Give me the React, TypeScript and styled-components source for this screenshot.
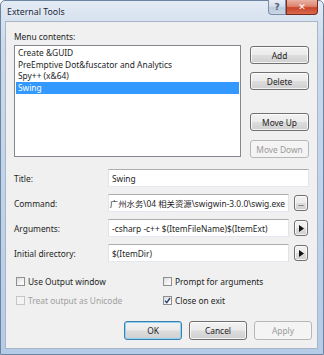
import React from "react";
import styled, { createGlobalStyle, css } from "styled-components";

const GlobalStyle = createGlobalStyle`
    html, body {
        margin: 0;
        padding: 0;
        background: #ffffff;
    }
    body {
        font-family: "Noto Sans", "Noto Sans CJK SC", sans-serif;
        font-size: 8.4px;
        color: #1e1e1e;
    }
`;

const Window = styled.div`
    width: 324px;
    height: 355px;
    box-sizing: border-box;
    border: 1px solid #6d84a0;
    border-radius: 5px 5px 0 0;
    background: linear-gradient(180deg, #e2eaf4 0%, #cbdaec 12%, #bfd2ea 60%, #b6cbe6 100%);
    display: flex;
    flex-direction: column;
    padding: 0 5px 5px 4px;
`;

const TitleBar = styled.div`
    height: 20px;
    display: flex;
    align-items: flex-start;
    justify-content: space-between;
`;

const TitleText = styled.span`
    margin: 5px 0 0 2px;
    font-size: 8.8px;
    color: #1b2838;
    text-shadow: 0 0 6px rgba(255, 255, 255, 0.9);
`;

const CaptionButtons = styled.div`
    display: flex;
    margin-top: -1px;
`;

const CaptionButton = styled.div<{ $close?: boolean }>`
    height: 15px;
    width: ${p => p.$close ? '32px' : '18px'};
    box-sizing: border-box;
    border: 1px solid ${p => p.$close ? '#7a2a1e' : '#7d8ea6'};
    border-top: none;
    border-radius: ${p => p.$close ? '0 0 4px 0' : '0 0 0 4px'};
    background: ${p => p.$close
        ? 'linear-gradient(180deg, #eab2a4 0%, #dd8570 45%, #c8452b 55%, #d86a4c 100%)'
        : 'linear-gradient(180deg, #e8eef6 0%, #d3deeb 45%, #bccbdd 55%, #c9d6e6 100%)'};
    display: flex;
    align-items: center;
    justify-content: center;
    font-family: "DejaVu Sans", sans-serif;
    font-weight: bold;
    font-size: 9px;
    color: ${p => p.$close ? '#ffffff' : '#4e5e74'};
`;

const Client = styled.div`
    flex: 1;
    background: #f0f0f0;
    border: 1px solid #a8b6c8;
    display: flex;
    flex-direction: column;
    padding: 9px 7px 0 8px;
`;

const Label = styled.div<{ $disabled?: boolean }>`
    color: ${p => p.$disabled ? '#a0a0a0' : '#1e1e1e'};
    white-space: nowrap;
`;

const MenuSection = styled.div`
    display: flex;
    gap: 9px;
    margin-top: 3px;
`;

const ListBox = styled.div`
    width: 227px;
    height: 112px;
    box-sizing: border-box;
    border: 1px solid #828790;
    background: #ffffff;
    padding: 1px 1px;
    overflow: hidden;
`;

const ListItem = styled.div<{ $selected?: boolean }>`
    height: 11.7px;
    line-height: 11.7px;
    padding-left: 2px;
    white-space: nowrap;
    background: ${p => p.$selected ? '#3399ff' : 'transparent'};
    color: ${p => p.$selected ? '#ffffff' : '#1e1e1e'};
`;

const ButtonColumn = styled.div`
    display: flex;
    flex-direction: column;
    padding-top: 1px;
`;

const winButton = css<{ $disabled?: boolean; $default?: boolean }>`
    box-sizing: border-box;
    border-radius: 3px;
    border: 1px solid ${p => p.$disabled ? '#b5b8ba' : p.$default ? '#3c7fb1' : '#707070'};
    background: ${p => p.$disabled
        ? '#f4f4f4'
        : 'linear-gradient(180deg, #f2f2f2 0%, #ebebeb 48%, #dddddd 52%, #cfcfcf 100%)'};
    box-shadow: ${p => p.$disabled ? 'none' : p.$default ? 'inset 0 0 0 1px #8fd3f2' : 'inset 0 0 0 1px rgba(255,255,255,0.75)'};
    color: ${p => p.$disabled ? '#9a9a9a' : '#1e1e1e'};
    display: flex;
    align-items: center;
    justify-content: center;
    white-space: nowrap;
`;

const PushButton = styled.div<{ $disabled?: boolean; $default?: boolean; $gapTop?: number }>`
    ${winButton};
    width: 59px;
    height: 18px;
    margin-top: ${p => p.$gapTop ?? 0}px;
`;

const FormGrid = styled.div`
    display: grid;
    grid-template-columns: 94px 181px 20px;
    row-gap: 7px;
    align-items: center;
    margin-top: 11px;
`;

const TextField = styled.div<{ $span?: boolean; $scrolled?: boolean }>`
    grid-column: ${p => p.$span ? '2 / 4' : 'auto'};
    height: 18px;
    box-sizing: border-box;
    border: 1px solid #abadb3;
    border-color: #abadb3 #e2e3ea #e3e9ef #e2e3ea;
    background: #ffffff;
    padding: 0 3px;
    display: flex;
    align-items: center;
    justify-content: ${p => p.$scrolled ? 'flex-end' : 'flex-start'};
    overflow: hidden;
    white-space: nowrap;
`;

const SideButton = styled.div<{ $disabled?: boolean; $default?: boolean }>`
    ${winButton};
    width: 14px;
    height: 16px;
    margin-left: 5px;
    font-size: 7px;
`;

const CheckGrid = styled.div`
    display: grid;
    grid-template-columns: 147px 1fr;
    row-gap: 8px;
    margin-top: 14px;
    margin-left: 2px;
`;

const CheckRow = styled.div<{ $disabled?: boolean }>`
    display: flex;
    align-items: center;
    gap: 3px;
    height: 11px;
    color: ${p => p.$disabled ? '#a0a0a0' : '#1e1e1e'};
`;

const CheckBox = styled.div<{ $disabled?: boolean }>`
    width: 9px;
    height: 9px;
    box-sizing: border-box;
    border: 1px solid ${p => p.$disabled ? '#c5c5c5' : '#8e8f8f'};
    background: ${p => p.$disabled ? '#f4f4f4' : 'linear-gradient(135deg, #dcdcdc 0%, #f4f4f4 60%, #ffffff 100%)'};
    display: flex;
    align-items: center;
    justify-content: center;
`;

const DialogButtons = styled.div`
    display: flex;
    justify-content: flex-end;
    gap: 7px;
    margin-top: 15px;
    margin-right: -2px;
`;

const DialogButton = styled(PushButton)`
    width: 58px;
    height: 19px;
`;

const Arrow = () => (
    <svg width="5" height="7" viewBox="0 0 5 7">
        <path d="M0 0 L5 3.5 L0 7 Z" fill="#111" />
    </svg>
);

const Check = () => (
    <svg width="7" height="7" viewBox="0 0 7 7">
        <path d="M1 3.6 L2.8 5.6 L6 1" stroke="#2a3f74" strokeWidth="1.4" fill="none" />
    </svg>
);

const menuItems = [
    "Create &GUID",
    "PreEmptive Dot&fuscator and Analytics",
    "Spy++ (x&64)",
    "Swing",
];

export default function App() {
    return (
        <>
            <GlobalStyle />
            <Window>
                <TitleBar>
                    <TitleText>External Tools</TitleText>
                    <CaptionButtons>
                        <CaptionButton>?</CaptionButton>
                        <CaptionButton $close>✕</CaptionButton>
                    </CaptionButtons>
                </TitleBar>
                <Client>
                    <Label>Menu contents:</Label>
                    <MenuSection>
                        <ListBox>
                            {menuItems.map((item, i) => (
                                <ListItem key={i} $selected={i === 3}>{item}</ListItem>
                            ))}
                        </ListBox>
                        <ButtonColumn>
                            <PushButton>Add</PushButton>
                            <PushButton $gapTop={8}>Delete</PushButton>
                            <PushButton $gapTop={23}>Move Up</PushButton>
                            <PushButton $gapTop={9} $disabled>Move Down</PushButton>
                        </ButtonColumn>
                    </MenuSection>
                    <FormGrid>
                        <Label>Title:</Label>
                        <TextField $span>Swing</TextField>
                        <Label>Command:</Label>
                        <TextField $scrolled>广州水务\04 相关资源\swigwin-3.0.0\swig.exe</TextField>
                        <SideButton>…</SideButton>
                        <Label>Arguments:</Label>
                        <TextField>-csharp -c++ $(ItemFileName)$(ItemExt)</TextField>
                        <SideButton><Arrow /></SideButton>
                        <Label>Initial directory:</Label>
                        <TextField>$(ItemDir)</TextField>
                        <SideButton><Arrow /></SideButton>
                    </FormGrid>
                    <CheckGrid>
                        <CheckRow><CheckBox />Use Output window</CheckRow>
                        <CheckRow><CheckBox />Prompt for arguments</CheckRow>
                        <CheckRow $disabled><CheckBox $disabled />Treat output as Unicode</CheckRow>
                        <CheckRow><CheckBox><Check /></CheckBox>Close on exit</CheckRow>
                    </CheckGrid>
                    <DialogButtons>
                        <DialogButton $default>OK</DialogButton>
                        <DialogButton>Cancel</DialogButton>
                        <DialogButton $disabled>Apply</DialogButton>
                    </DialogButtons>
                </Client>
            </Window>
        </>
    );
}
